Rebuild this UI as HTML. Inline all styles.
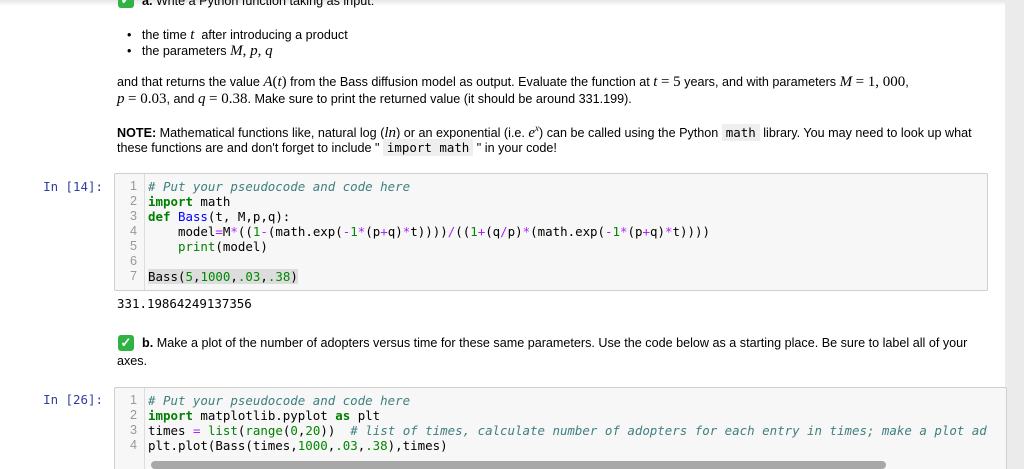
<!DOCTYPE html>
<html><head><meta charset="utf-8"><style>
html,body{margin:0;width:1024px;height:469px;overflow:hidden}
body{background:#fff;position:relative;font-family:"Liberation Sans",Arial,sans-serif;font-size:12.6px;color:#000}
.a{position:absolute;white-space:nowrap}
.m{font-family:"Liberation Serif",serif;font-style:italic;font-size:15px}
.mr{font-family:"Liberation Serif",serif;font-size:15px}
.code{font-family:"DejaVu Sans Mono","Liberation Mono",monospace;font-size:12.45px}
.box{position:absolute;background:#f7f7f7;border:1px solid #cfcfcf;border-radius:2px;overflow:hidden}
.gut{position:absolute;top:0;bottom:0;left:0;width:29px;border-right:1px solid #ddd;background:#f7f7f7}
.ln{position:absolute;width:22px;text-align:right;color:#999;line-height:15px}
.cl{position:absolute;left:33px;line-height:15px;white-space:pre}
.c{color:#408080;font-style:italic}.k{color:#008000;font-weight:bold}.f{color:#0000ff}.o{color:#aa22ff}.n{color:#080}.b{color:#008000}
.prompt{position:absolute;color:#303f9f;font-family:"DejaVu Sans Mono","Liberation Mono",monospace;font-size:12.45px;text-align:right;width:103px}
.chk{position:absolute;width:16px;height:16px;background:#2fb344;border-radius:3px;color:#fff;font-size:13px;line-height:16px;text-align:center;font-weight:bold}
.ic{font-family:"DejaVu Sans Mono",monospace;background:#eee;padding:1px 4px;font-size:12.45px}
</style></head><body>
<div class="a" style="left:0;top:0;width:1024px;height:6px;background:linear-gradient(#e6e6e6,#fff)"></div>
<div class="a" style="left:1005px;top:0;width:19px;height:469px;background:#ebebeb"></div>
<div class="chk" style="left:118px;top:-8px">✓</div>
<div class="a" style="left:142px;top:-6px"><b>a.</b> Write a Python function taking as input:</div>
<div class="a" style="left:127px;top:27px">•&nbsp;&nbsp; the time <span class="m">t</span>&nbsp; after introducing a product</div>
<div class="a" style="left:127px;top:43px">•&nbsp;&nbsp; the parameters <span class="m">M</span><span class="mr">, </span><span class="m">p</span><span class="mr">, </span><span class="m">q</span></div>
<div class="a" style="left:117px;top:74px">and that returns the value <span class="m">A</span><span class="mr">(</span><span class="m">t</span><span class="mr">)</span> from the Bass diffusion model as output. Evaluate the function at <span class="m">t</span> <span class="mr">= 5</span> years, and with parameters <span class="m">M</span> <span class="mr">= 1, 000</span>,</div>
<div class="a" style="left:117px;top:91px"><span class="m">p</span> <span class="mr">= 0.03</span>, and <span class="m">q</span> <span class="mr">= 0.38</span>. Make sure to print the returned value (it should be around 331.199).</div>
<div class="a" style="left:117px;top:123px"><b>NOTE:</b> Mathematical functions like, natural log (<span class="m">ln</span>) or an exponential (i.e. <span class="m">e<sup style="font-size:9px">x</sup></span>) can be called using the Python <span class="ic">math</span> library. You may need to look up what</div>
<div class="a" style="left:117px;top:140px">these functions are and don't forget to include " <span class="ic">import math</span> " in your code!</div>

<div class="prompt" style="left:0;top:179px">In [14]:</div>
<div class="box" style="left:114px;top:173px;width:872px;height:116px">
<div class="gut"></div>
<div class="ln" style="top:5px">1<br>2<br>3<br>4<br>5<br>6<br>7</div>
<div class="cl code" style="top:5px"><span class="c"># Put your pseudocode and code here</span>
<span class="k">import</span> math
<span class="k">def</span> <span class="f">Bass</span>(t, M,p,q):
    model<span class="o">=</span>M<span class="o">*</span>((<span class="n">1</span><span class="o">-</span>(math.exp(<span class="o">-</span><span class="n">1</span><span class="o">*</span>(p<span class="o">+</span>q)<span class="o">*</span>t))))<span class="o">/</span>((<span class="n">1</span><span class="o">+</span>(q<span class="o">/</span>p)<span class="o">*</span>(math.exp(<span class="o">-</span><span class="n">1</span><span class="o">*</span>(p<span class="o">+</span>q)<span class="o">*</span>t))))
    <span class="b">print</span>(model)

<span style="background:#ddd">Bass(<span class="n">5</span>,<span class="n">1000</span>,<span class="n">.03</span>,<span class="n">.38</span>)</span></div>
</div>
<div class="a code" style="left:117px;top:296px">331.19864249137356</div>

<div class="chk" style="left:118px;top:335px">✓</div>
<div class="a" style="left:142px;top:336px"><b>b.</b> Make a plot of the number of adopters versus time for these same parameters. Use the code below as a starting place. Be sure to label all of your</div>
<div class="a" style="left:117px;top:354px">axes.</div>

<div class="prompt" style="left:0;top:392px">In [26]:</div>
<div class="box" style="left:114px;top:387px;width:891px;height:90px">
<div class="gut"></div>
<div class="ln" style="top:5px">1<br>2<br>3<br>4</div>
<div class="cl code" style="top:5px"><span class="c"># Put your pseudocode and code here</span>
<span class="k">import</span> matplotlib.pyplot <span class="k">as</span> plt
times <span class="o">=</span> <span class="b">list</span>(<span class="b">range</span>(<span class="n">0</span>,<span class="n">20</span>))  <span class="c"># list of times, calculate number of adopters for each entry in times; make a plot ad</span>
plt.plot(Bass(times,<span class="n">1000</span>,<span class="n">.03</span>,<span class="n">.38</span>),times)</div>
<div class="a" style="left:36px;top:73px;width:735px;height:8px;background:#a8a8a8;border-radius:4px"></div>
</div>
</body></html>
